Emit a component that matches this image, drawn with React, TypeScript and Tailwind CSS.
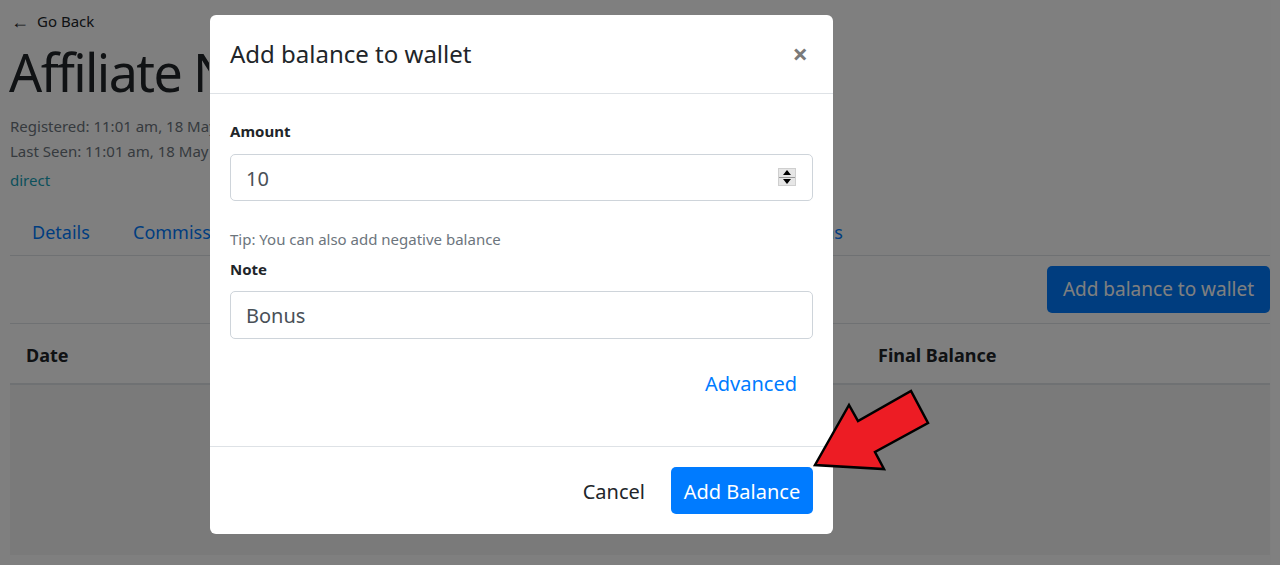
import React from "react";

const font = { fontFamily: '"Noto Sans", "Open Sans", sans-serif' };

function Spinner() {
  return (
    <div className="absolute left-[547px] top-[13px] w-[18px] h-[18px] bg-[#e6e6e6] border border-[#cfcfcf] flex flex-col">
      <div className="flex-1 flex items-center justify-center">
        <svg width="8" height="5" viewBox="0 0 8 5"><path d="M0 5 L4 0 L8 5 Z" fill="#000" /></svg>
      </div>
      <div className="h-px bg-[#9a9a9a]" />
      <div className="flex-1 flex items-center justify-center">
        <svg width="8" height="5" viewBox="0 0 8 5"><path d="M0 0 L8 0 L4 5 Z" fill="#000" /></svg>
      </div>
    </div>
  );
}

export default function App() {
  return (
    <div className="relative w-[1280px] h-[565px] overflow-hidden bg-white text-[#212529]" style={font}>
      {/* Background page */}
      <div className="px-[10px] pt-[9px]">
        <div className="flex items-center h-[24px] text-[15px] leading-[24px]">
          <span className="ml-[1px] w-[26px] text-[18px] leading-[22px]">←</span>
          <span>Go Back</span>
        </div>
        <h1 className="mt-[10px] w-[200px] overflow-hidden whitespace-nowrap text-[52px] leading-[58px] font-normal -ml-[1px] tracking-[-1.6px]">Affiliate Name</h1>
        <div className="mt-[13px] w-[200px] overflow-hidden whitespace-nowrap text-[15px] leading-[25px] text-[#6c757d]">
          <div>Registered: 11:01 am, 18 May 2023</div>
          <div>Last Seen: 11:01 am, 18 May 2023</div>
        </div>
        <div className="mt-[4px] text-[15px] leading-[24px] text-[#17a2b8]">direct</div>
        <div className="mt-[17px] flex border-b border-[#dee2e6] h-[47px] items-center text-[18px] text-[#007bff]">
          <span className="ml-[22px] w-[101px] shrink-0">Details</span>
          <div className="w-[77px] shrink-0 overflow-hidden whitespace-nowrap">Commissions</div>
          <div className="ml-[623px] w-[10px] shrink-0 overflow-hidden flex justify-end">
            <span className="shrink-0 whitespace-nowrap">Wallet Transactions</span>
          </div>
        </div>
        <div className="flex justify-end pt-[10px] pb-[10px]">
          <button className="h-[47px] w-[223px] rounded-[5px] bg-[#007bff] text-white text-[19px]">
            Add balance to wallet
          </button>
        </div>
        <div className="border-t border-[#dee2e6]">
          <div className="flex h-[61px] pt-[20px] items-start border-b-2 border-[#dee2e6] text-[18px] leading-[22px] font-bold">
            <span className="ml-[16px] w-[852px]">Date</span>
            <span>Final Balance</span>
          </div>
          <div className="h-[170px] bg-[#f4f4f4]" />
        </div>
      </div>

      {/* Overlay */}
      <div className="absolute inset-0 bg-black/50" />

      {/* Modal */}
      <div className="absolute left-[210px] top-[15px] w-[623px] bg-white rounded-[6px] flex flex-col">
        <div className="h-[79px] pl-[20px] pr-[25px] flex items-center justify-between border-b border-[#dee2e6]">
          <div className="text-[24px] leading-[36px] text-[#212529]">Add balance to wallet</div>
          <div className="text-[#7a7a7a] text-[27px] font-bold leading-none -mt-[2px]">×</div>
        </div>
        <div className="px-[20px] pt-[26px] pb-[47px]">
          <div className="text-[15px] leading-[22px] font-bold">Amount</div>
          <div className="relative mt-[12px] h-[47px] border border-[#ced4da] rounded-[5px] flex items-center pl-[15px] pt-[3px] text-[20px] text-[#495057]">
            10
            <Spinner />
          </div>
          <div className="mt-[28px] text-[15px] leading-[20px] text-[#6c757d]">Tip: You can also add negative balance</div>
          <div className="mt-[9px] text-[15px] leading-[22px] font-bold">Note</div>
          <div className="mt-[11px] h-[48px] border border-[#ced4da] rounded-[5px] flex items-center pl-[15px] pt-[2px] text-[20px] text-[#495057]">
            Bonus
          </div>
          <div className="mt-[30px] flex justify-end pr-[16px] text-[20px] leading-[30px] text-[#007bff]">Advanced</div>
        </div>
        <div className="border-t border-[#dee2e6] pt-[20px] pb-[20px] pr-[20px] flex justify-end items-center">
          <span className="text-[20px] text-[#212529] mr-[26px] pt-[2px]">Cancel</span>
          <button className="h-[47px] w-[142px] rounded-[5px] bg-[#007bff] text-white text-[20px] pt-[2px]">Add Balance</button>
        </div>
      </div>

      {/* Red arrow */}
      <svg className="absolute left-0 top-0 pointer-events-none" width="1280" height="565">
        <polygon
          points="815,465 849,405 858,421 911,391 928,423 875,452 884,469"
          fill="#ed1c24"
          stroke="#000"
          strokeWidth="2.5"
          strokeLinejoin="miter"
        />
      </svg>
    </div>
  );
}
